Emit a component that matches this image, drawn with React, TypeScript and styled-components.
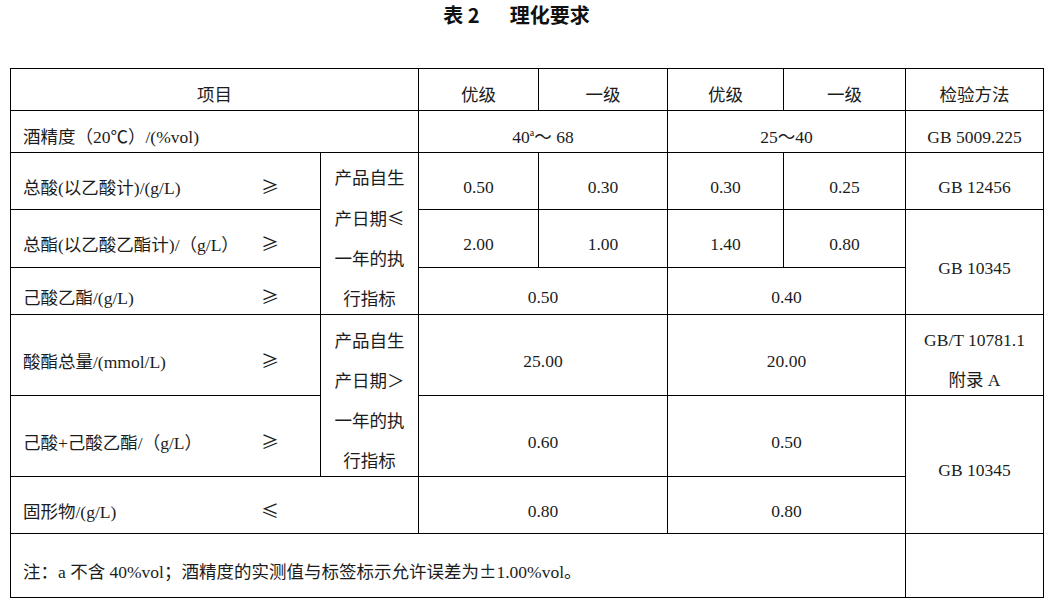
import { createGlobalStyle, styled } from 'styled-components'

const GlobalStyle = createGlobalStyle`
  body {
    margin: 0;
    background: #fff;
  }
`

const Page = styled.div`
  padding: 0 12px 0 10px;
  font-family: 'Liberation Serif', 'Noto Sans CJK SC', serif;
  color: #1c1c1c;
`

const Title = styled.h2`
  margin: 0;
  height: 68px;
  display: flex;
  justify-content: center;
  gap: 30px;
  padding: 4px 20px 0 0;
  box-sizing: border-box;
  font-family: 'Noto Sans CJK SC', sans-serif;
  font-size: 20px;
  line-height: 22px;
  font-weight: 700;
  color: #111;
`

const Table = styled.table`
  width: 1033px;
  border-collapse: collapse;
  table-layout: fixed;
  font-size: 17.5px;
`

const Row = styled.tr<{ $h: number }>`
  height: ${(p) => p.$h}px;
`

const Cell = styled.td<{ $left?: boolean }>`
  border: 1px solid #000;
  padding: ${(p) => (p.$left ? '11px 4px 0 12px' : '11px 4px 0')};
  text-align: ${(p) => (p.$left ? 'left' : 'center')};
  vertical-align: middle;
  white-space: nowrap;
  line-height: 22px;
`

const StackCell = styled.td`
  border: 1px solid #000;
  padding: 0;
  text-align: center;
  vertical-align: middle;
`

const Stack = styled.div`
  line-height: 40px;
  margin: 5px 0 -5px;
`

const ItemLine = styled.div`
  display: flex;
  align-items: baseline;
`

const Label = styled.span`
  display: inline-block;
  min-width: 236px;
`

// symbols drawn in the CJK face, as the source's SimSun does
const Sym = styled.span`
  font-family: 'Noto Sans CJK SC', sans-serif;
`

const Sign = styled(Sym)`
  padding-left: 2px;
  font-size: 18px;
`

const Sup = styled.sup`
  font-size: 10px;
  line-height: 0;
`

const Item = ({ label, sign }: { label: string; sign?: string }) => (
  <ItemLine>
    <Label>{label}</Label>
    {sign && <Sign>{sign}</Sign>}
  </ItemLine>
)

const widths = [310, 98, 120, 129, 116, 122, 138]

export default function App() {
  return (
    <Page>
      <GlobalStyle />
      <Title>
        <span>表 2</span>
        <span>理化要求</span>
      </Title>
      <Table>
        <colgroup>
          {widths.map((w, i) => (
            <col key={i} style={{ width: w }} />
          ))}
        </colgroup>
        <tbody>
          <Row $h={42}>
            <Cell colSpan={2}>项目</Cell>
            <Cell>优级</Cell>
            <Cell>一级</Cell>
            <Cell>优级</Cell>
            <Cell>一级</Cell>
            <Cell>检验方法</Cell>
          </Row>
          <Row $h={42}>
            <Cell colSpan={2} $left>
              <Item label="酒精度（20℃）/(%vol)" />
            </Cell>
            <Cell colSpan={2}>
              40<Sup>a</Sup>～ 68
            </Cell>
            <Cell colSpan={2}>25～40</Cell>
            <Cell>GB 5009.225</Cell>
          </Row>
          <Row $h={57}>
            <Cell $left>
              <Item label="总酸(以乙酸计)/(g/L)" sign="≥" />
            </Cell>
            <StackCell rowSpan={3}>
              <Stack>
                产品自生
                <br />
                产日期<Sym>≤</Sym>
                <br />
                一年的执
                <br />
                行指标
              </Stack>
            </StackCell>
            <Cell>0.50</Cell>
            <Cell>0.30</Cell>
            <Cell>0.30</Cell>
            <Cell>0.25</Cell>
            <Cell>GB 12456</Cell>
          </Row>
          <Row $h={58}>
            <Cell $left>
              <Item label="总酯(以乙酸乙酯计)/（g/L）" sign="≥" />
            </Cell>
            <Cell>2.00</Cell>
            <Cell>1.00</Cell>
            <Cell>1.40</Cell>
            <Cell>0.80</Cell>
            <Cell rowSpan={2}>GB 10345</Cell>
          </Row>
          <Row $h={47}>
            <Cell $left>
              <Item label="己酸乙酯/(g/L)" sign="≥" />
            </Cell>
            <Cell colSpan={2}>0.50</Cell>
            <Cell colSpan={2}>0.40</Cell>
          </Row>
          <Row $h={81}>
            <Cell $left>
              <Item label="酸酯总量/(mmol/L)" sign="≥" />
            </Cell>
            <StackCell rowSpan={2}>
              <Stack>
                产品自生
                <br />
                产日期＞
                <br />
                一年的执
                <br />
                行指标
              </Stack>
            </StackCell>
            <Cell colSpan={2}>25.00</Cell>
            <Cell colSpan={2}>20.00</Cell>
            <StackCell>
              <Stack>
                GB/T 10781.1
                <br />
                附录 A
              </Stack>
            </StackCell>
          </Row>
          <Row $h={81}>
            <Cell $left>
              <Item label="己酸+己酸乙酯/（g/L）" sign="≥" />
            </Cell>
            <Cell colSpan={2}>0.60</Cell>
            <Cell colSpan={2}>0.50</Cell>
            <Cell rowSpan={2}>GB 10345</Cell>
          </Row>
          <Row $h={57}>
            <Cell colSpan={2} $left>
              <Item label="固形物/(g/L)" sign="≤" />
            </Cell>
            <Cell colSpan={2}>0.80</Cell>
            <Cell colSpan={2}>0.80</Cell>
          </Row>
          <Row $h={64}>
            <Cell colSpan={6} $left>
              注：a 不含 40%vol；酒精度的实测值与标签标示允许误差为<Sym>±</Sym>1.00%vol。
            </Cell>
            <Cell />
          </Row>
        </tbody>
      </Table>
    </Page>
  )
}
